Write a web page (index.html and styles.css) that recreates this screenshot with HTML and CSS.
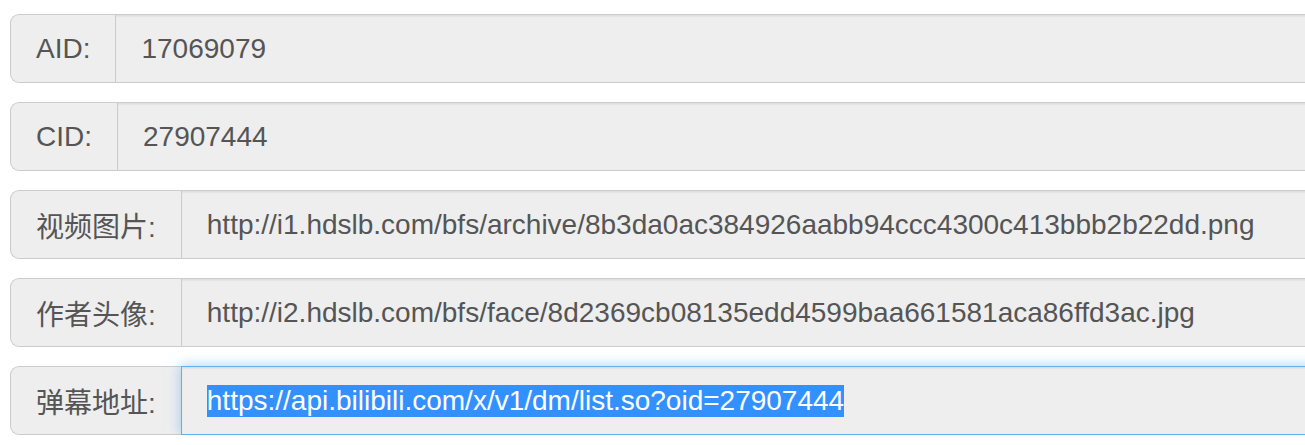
FILE: index.html
```html
<!DOCTYPE html>
<html lang="zh">
<head>
<meta charset="utf-8">
<title>Info</title>
<link rel="stylesheet" href="styles.css">
</head>
<body>
<div class="form">
  <div class="group">
    <span class="addon">AID:</span>
    <div class="field">17069079</div>
  </div>
  <div class="group">
    <span class="addon">CID:</span>
    <div class="field">27907444</div>
  </div>
  <div class="group">
    <span class="addon">视频图片:</span>
    <div class="field">http://i1.hdslb.com/bfs/archive/8b3da0ac384926aabb94ccc4300c413bbb2b22dd.png</div>
  </div>
  <div class="group">
    <span class="addon">作者头像:</span>
    <div class="field">http://i2.hdslb.com/bfs/face/8d2369cb08135edd4599baa661581aca86ffd3ac.jpg</div>
  </div>
  <div class="group">
    <span class="addon">弹幕地址:</span>
    <div class="field focus"><span class="sel">https://api.bilibili.com/x/v1/dm/list.so?oid=27907444</span></div>
  </div>
</div>
</body>
</html>
```
FILE: styles.css
```css
html, body {
  margin: 0;
  padding: 0;
  background: #fff;
  overflow: hidden;
}
body {
  font-family: "Liberation Sans", Arial, "Noto Sans CJK SC", sans-serif;
  color: #555;
}
.form {
  width: 1340px;
  padding: 14px 0 0 10px;
  display: flex;
  flex-direction: column;
  gap: 19px;
}
.group {
  display: flex;
  height: 69px;
}
.addon {
  display: flex;
  align-items: center;
  flex: none;
  padding: 0 25px;
  font-size: 28px;
  background: #eee;
  border: 1.5px solid #ccc;
  border-right: 0;
  border-radius: 9px 0 0 9px;
  white-space: nowrap;
}
.field {
  flex: 1;
  display: flex;
  align-items: center;
  padding: 0 25px;
  font-size: 28px;
  background: #eee;
  border: 1.5px solid #ccc;
  box-shadow: inset 0 1.5px 1.5px rgba(0, 0, 0, 0.075);
  white-space: nowrap;
}
.field.focus {
  border-color: #66afe9;
  box-shadow: inset 0 1.5px 1.5px rgba(0, 0, 0, 0.075), 0 0 12px rgba(102, 175, 233, 0.6);
}
.sel {
  background: #3390ff;
  color: #fff;
}
```
